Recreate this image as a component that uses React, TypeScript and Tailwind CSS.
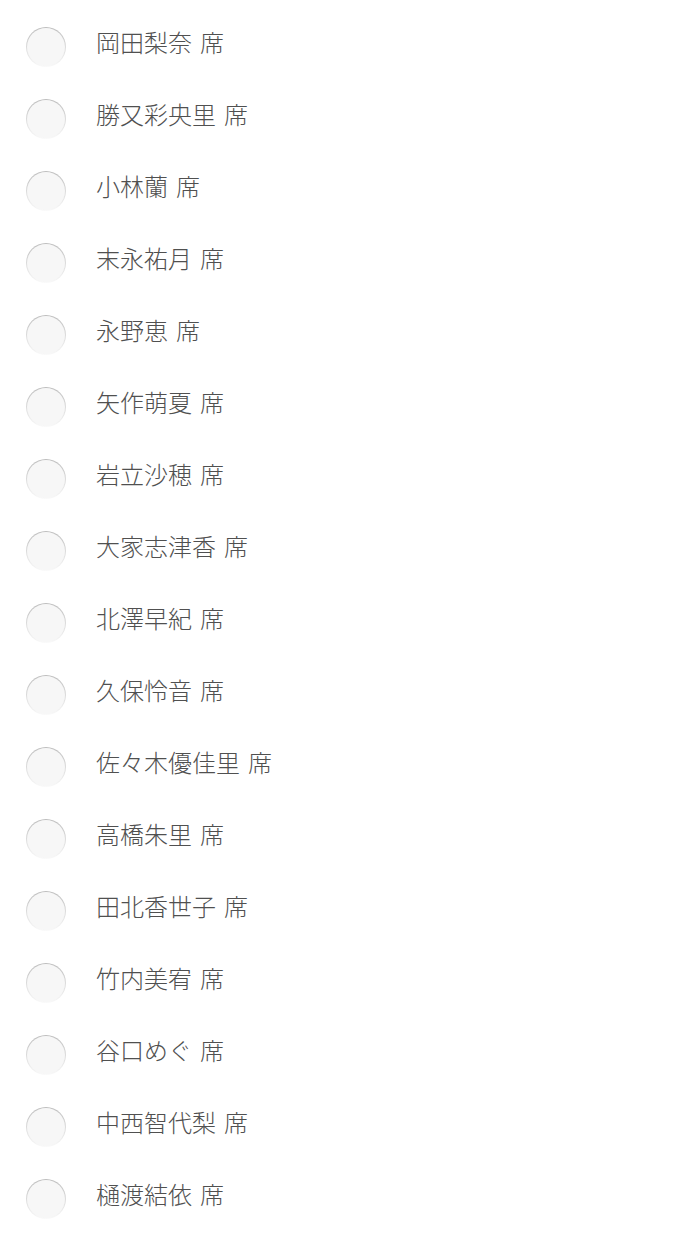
import React from 'react';

const names = [
  '岡田梨奈',
  '勝又彩央里',
  '小林蘭',
  '末永祐月',
  '永野恵',
  '矢作萌夏',
  '岩立沙穂',
  '大家志津香',
  '北澤早紀',
  '久保怜音',
  '佐々木優佳里',
  '高橋朱里',
  '田北香世子',
  '竹内美宥',
  '谷口めぐ',
  '中西智代梨',
  '樋渡結依',
];

const Radio: React.FC = () => (
  <div className="w-10 h-10 shrink-0 rounded-full p-px bg-gradient-to-b from-[#bcbcbc] via-[#dadada] to-[#fafafa] mt-1">
    <div className="w-full h-full rounded-full bg-[#f7f7f7]" />
  </div>
);

export default function App() {
  return (
    <div
      className="w-full min-h-screen bg-white pt-[9px]"
      style={{ fontFamily: '"Noto Sans CJK JP", "Noto Sans", sans-serif' }}
    >
      <ul>
        {names.map((name) => (
          <li key={name} className="flex items-center h-[72px] pl-[26px]">
            <Radio />
            <span className="ml-[30px] pb-[6px] text-[24px] font-light text-[#505050] leading-none">
              {name}
              <span className="ml-[8px]">席</span>
            </span>
          </li>
        ))}
      </ul>
    </div>
  );
}
